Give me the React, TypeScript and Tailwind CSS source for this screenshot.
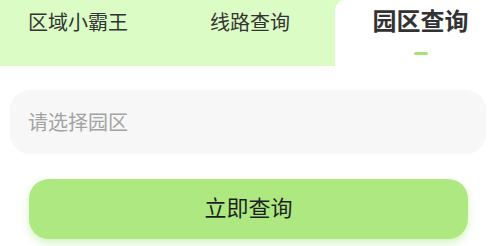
import React from "react";

export default function App() {
  const font = { fontFamily: '"Noto Sans CJK SC", "Noto Sans", sans-serif' };
  return (
    <div className="w-[490px] h-[246px] bg-white overflow-hidden" style={font}>
      <div className="flex h-[66px] bg-[#dbfcc5]">
        <div className="w-[335px] flex items-start pt-[7px]">
          <div className="pl-[28px] text-[20px] leading-[30px] text-[#333333]">区域小霸王</div>
          <div className="pl-[82px] text-[20px] leading-[30px] text-[#333333]">线路查询</div>
        </div>
        <div className="flex-1 bg-white rounded-tl-[10px] flex flex-col items-center pl-[16px] pt-[3px]">
          <div className="text-[24px] leading-[34px] font-bold text-[#333333]">园区查询</div>
          <div className="mt-[15px] w-[14px] h-[3px] rounded-full bg-[#a6e47a]"></div>
        </div>
      </div>
      <div className="px-[10px] pt-[24px] pr-[4px]">
        <div className="h-[64px] rounded-[20px] bg-[#f7f7f7] flex items-center pl-[18px]">
          <span className="text-[20px] text-[#a3a3a3]">请选择园区</span>
        </div>
      </div>
      <div className="pl-[29px] pr-[22px] pt-[25px]">
        <div className="h-[60px] rounded-[20px] bg-[#ade980] shadow-[0_4px_8px_rgba(160,230,120,0.45)] flex items-center justify-center pb-[5px]">
          <span className="text-[22px] text-[#1f1f1f]">立即查询</span>
        </div>
      </div>
    </div>
  );
}
